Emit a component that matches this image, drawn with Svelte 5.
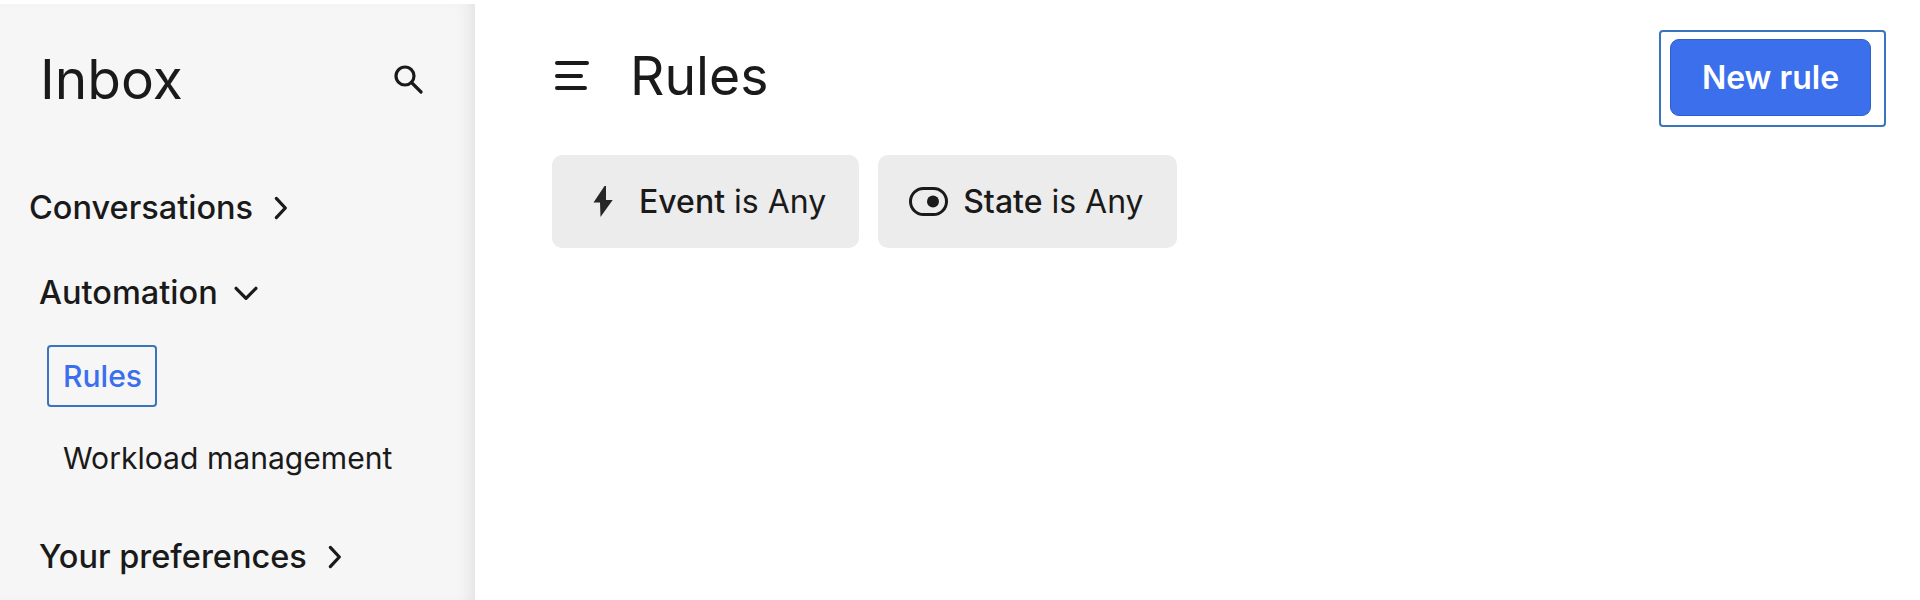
<script>
  const right = "M8 3.800 15.700 12 8 20.200";
</script>

<div class="page">
  <aside class="sidebar">
    <div class="side-head">
      <h2>Inbox</h2>
      <svg class="search" viewBox="0 0 30 30" fill="none" stroke="#1a1a1a" stroke-width="3.2" stroke-linecap="round">
        <circle cx="12" cy="12" r="9" />
        <path d="M18.500 18.500 28 28" />
      </svg>
    </div>
    <div class="group conv">
      <span>Conversations</span>
      <svg class="chev" viewBox="0 0 24 24" fill="none" stroke="#1a1a1a" stroke-width="2.800" stroke-linecap="round" stroke-linejoin="round"><path d={right} /></svg>
    </div>
    <div class="group auto">
      <span>Automation</span>
      <svg class="chev down" viewBox="0 0 24 24" fill="none" stroke="#1a1a1a" stroke-width="2.800" stroke-linecap="round" stroke-linejoin="round"><path d="M3.500 8 12 16.600 20.500 8" /></svg>
    </div>
    <div class="sub">
      <a class="active" href="#rules">Rules</a>
      <a class="plain" href="#workload">Workload management</a>
    </div>
    <div class="group prefs">
      <span>Your preferences</span>
      <svg class="chev" viewBox="0 0 24 24" fill="none" stroke="#1a1a1a" stroke-width="2.800" stroke-linecap="round" stroke-linejoin="round"><path d={right} /></svg>
    </div>
  </aside>

  <main class="main">
    <header class="top">
      <div class="title">
        <svg class="menu" viewBox="0 0 34 30" fill="none" stroke="#1a1a1a" stroke-width="4" stroke-linecap="round">
          <path d="M2 2h30M2 15h24M2 27h28" />
        </svg>
        <h1>Rules</h1>
      </div>
      <div class="focus"><button class="primary">New rule</button></div>
    </header>
    <div class="chips">
      <button class="chip">
        <svg class="icon" viewBox="0 0 39 31" fill="#262626"><path d="M18.500 0 7.500 16.500H14L14.500 31 26.700 14H20V0Z" /></svg>
        <span><b>Event</b> is Any</span>
      </button>
      <button class="chip state">
        <svg class="icon" viewBox="0 0 39 31" fill="none" stroke="#1a1a1a" stroke-width="3">
          <rect x="-1.500" y="2.500" width="36" height="26" rx="13" />
          <circle cx="21" cy="15.500" r="6" fill="#1a1a1a" stroke="none" />
        </svg>
        <span><b>State</b> is Any</span>
      </button>
    </div>
  </main>
</div>

<style>
  :global(body) {
    margin: 0;
    background: #fff;
  }
  .page {
    display: flex;
    height: 600px;
    overflow: hidden;
    font-family: Inter, "Liberation Sans", sans-serif;
    color: #1a1a1a;
  }
  .sidebar {
    box-sizing: border-box;
    flex: 0 0 475px;
    margin-top: 4px;
    background: #f6f6f6;
    box-shadow: inset -14px 0 18px -12px #dcdcdc;
    display: flex;
    flex-direction: column;
    align-items: flex-start;
  }
  .side-head {
    box-sizing: border-box;
    width: 100%;
    display: flex;
    align-items: center;
    justify-content: space-between;
    padding: 40px 52px 0 40px;
    height: 110px;
  }
  h2, h1 {
    margin: 0;
    font-weight: 400;
    font-size: 55px;
    line-height: 60px;
  }
  h1 {
    font-size: 53.500px;
  }
  .search {
    width: 30px;
    height: 30px;
  }
  .group {
    display: flex;
    align-items: center;
    font-size: 32.500px;
    font-weight: 500;
    line-height: 40px;
  }
  .chev {
    width: 28px;
    height: 28px;
    margin-left: 14px;
  }
  .conv {
    margin: 74px 0 0 29px;
  }
  .auto {
    margin: 45px 0 0 39px;
  }
  .sub {
    display: flex;
    flex-direction: column;
    align-items: flex-start;
    margin: 32px 0 0 47px;
  }
  .sub a {
    box-sizing: border-box;
    font-size: 30.100px;
    line-height: 40px;
    text-decoration: none;
    color: #1a1a1a;
    padding: 9px 14px;
    border: 2px solid transparent;
    border-radius: 4px;
    height: 62px;
  }
  .sub .active {
    color: #3b6fec;
    font-weight: 500;
    border-color: #3a74bd;
    padding: 9px 13px 9px 14px;
  }
  .sub .plain {
    margin-top: 20px;
  }
  .prefs {
    margin: 48px 0 0 39px;
  }
  .main {
    flex: 1;
    min-width: 0;
    padding: 30px 34px 0 77px;
  }
  .top {
    display: flex;
    justify-content: space-between;
    align-items: flex-start;
  }
  .title {
    display: flex;
    align-items: center;
    gap: 41px;
    height: 96px;
    margin-top: -2px;
    margin-left: 3px;
  }
  .menu {
    width: 34px;
    height: 30px;
  }
  .focus {
    box-sizing: border-box;
    width: 227px;
    height: 97px;
    border: 2px solid #3a74bd;
    border-radius: 4px;
    padding: 7px 13px 0 9px;
  }
  .primary {
    display: block;
    width: 100%;
    height: 77px;
    background: #3b6fec;
    border: 1px solid #2c5fc7;
    border-radius: 9px;
    color: #fff;
    font: 600 32px Inter, "Liberation Sans", sans-serif;
  }
  .chips {
    display: flex;
    gap: 19px;
    margin-top: 28px;
  }
  .chip {
    display: flex;
    align-items: center;
    height: 93px;
    padding: 0 33px 0 34px;
    gap: 14px;
    background: #ececec;
    border: 0;
    border-radius: 10px;
    color: #1a1a1a;
    font: 400 32px Inter, "Liberation Sans", sans-serif;
  }
  .chip.state {
    gap: 12px;
  }
  .chip b {
    font-weight: 550;
  }
  .icon {
    width: 39px;
    height: 31px;
    overflow: visible;
  }
</style>
